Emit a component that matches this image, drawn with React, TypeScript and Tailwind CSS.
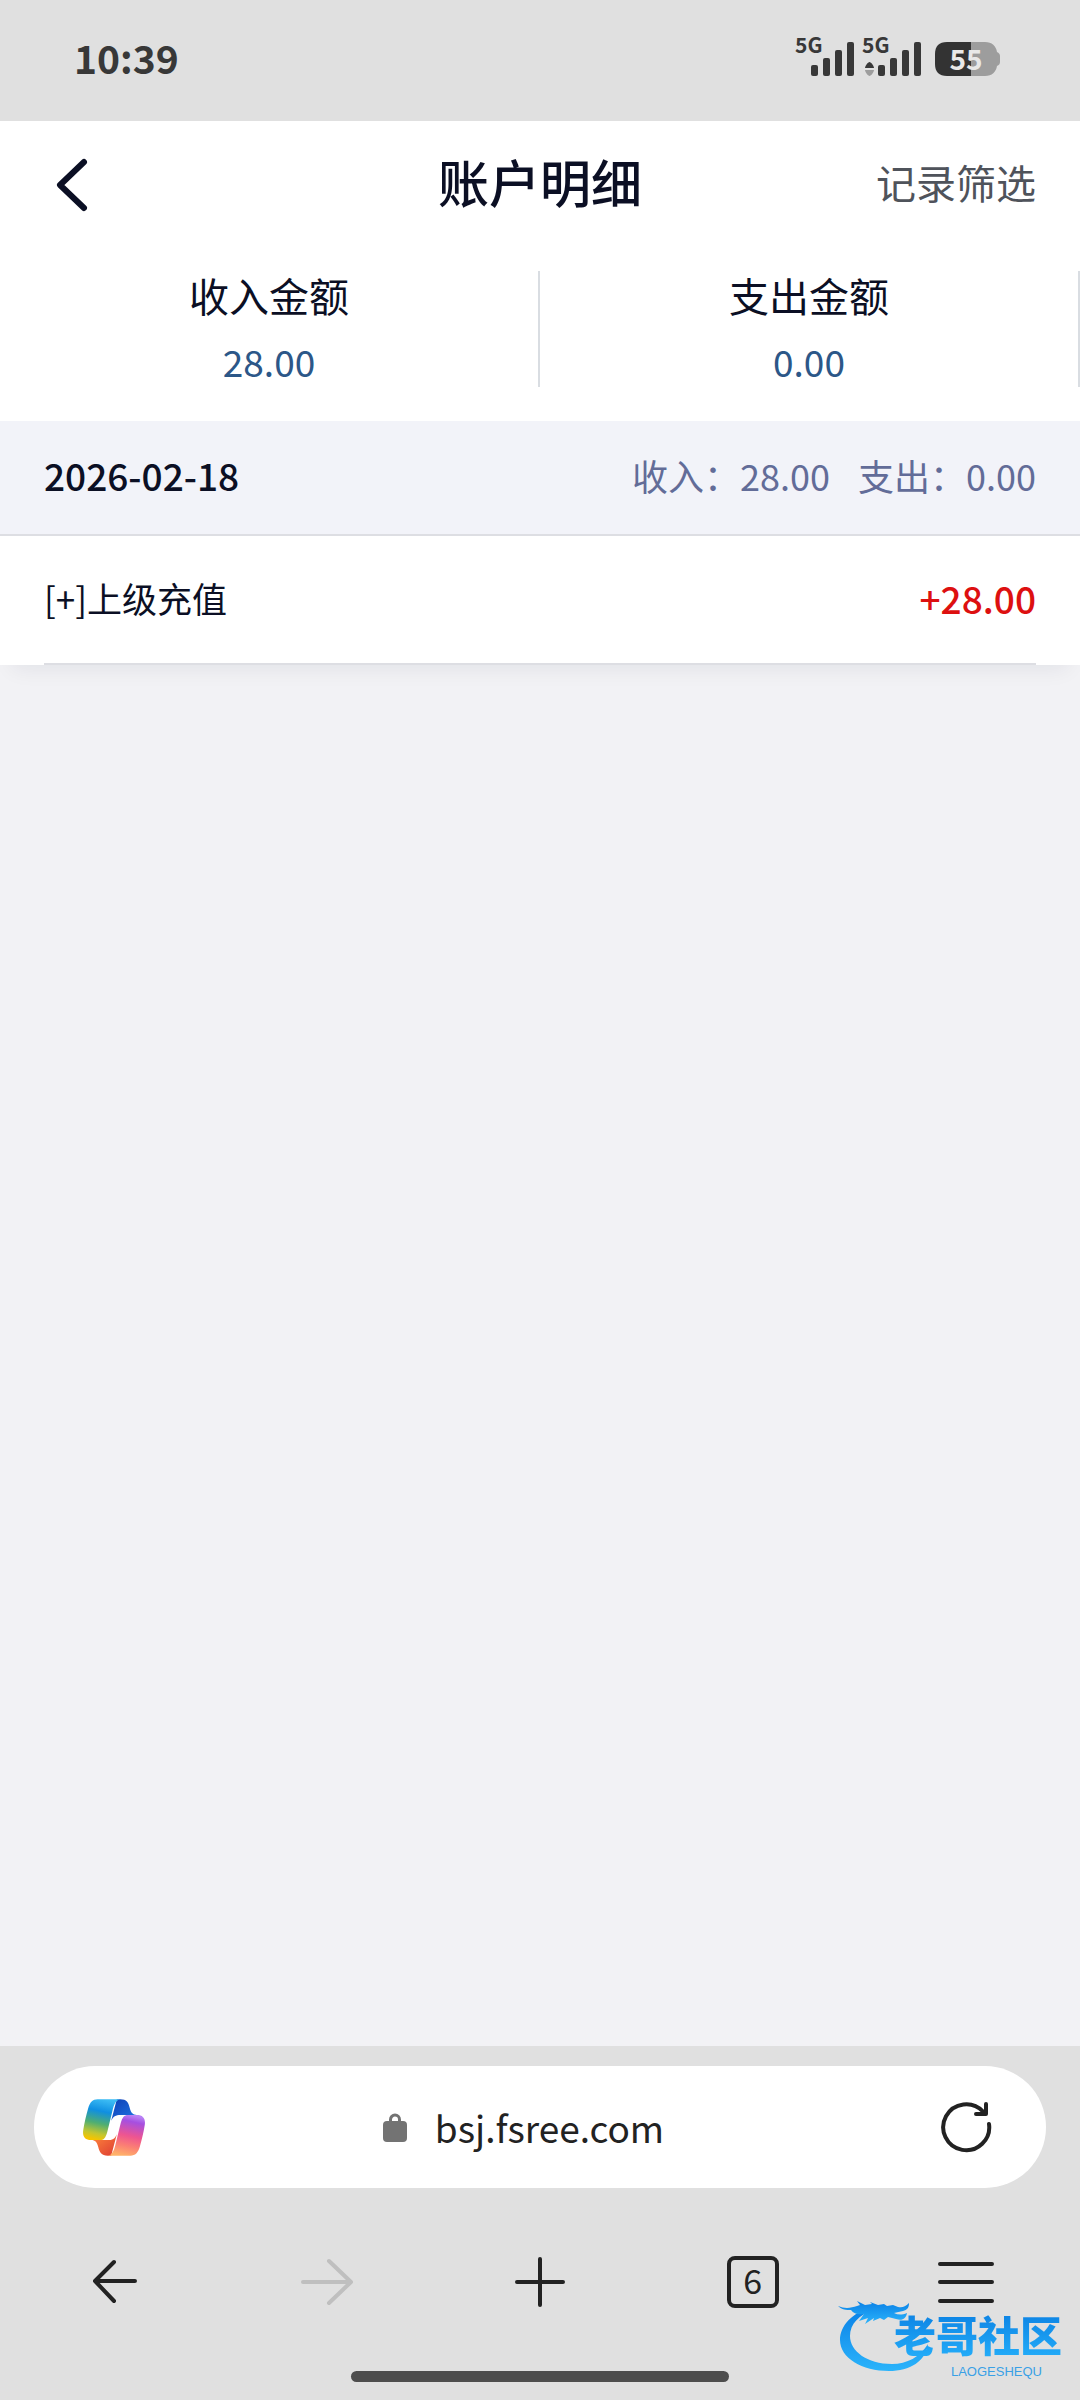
import type { ReactNode } from 'react';

interface LedgerEntry {
  title: string;
  amount: string;
}

interface LedgerDay {
  date: string;
  income: string;
  expense: string;
  entries: LedgerEntry[];
}

const totals = [
  { label: '收入金额', value: '28.00' },
  { label: '支出金额', value: '0.00' },
];

const days: LedgerDay[] = [
  {
    date: '2026-02-18',
    income: '28.00',
    expense: '0.00',
    entries: [{ title: '[+]上级充值', amount: '+28.00' }],
  },
];

const StatusIcons = () => (
  <svg width="212" height="62" viewBox="790 26 212 62" fill="#383838" role="img" aria-label="5G, 电量 55%">
    <g fontFamily="'Noto Sans CJK SC', sans-serif" fontWeight="700" fontSize="21">
      <text x="795" y="53">5G</text>
      <text x="862" y="53">5G</text>
    </g>
    <rect x="811" y="65" width="7" height="11" rx="2" />
    <rect x="823" y="58" width="7" height="18" rx="2" />
    <rect x="835" y="50" width="7" height="26" rx="2" />
    <rect x="847" y="42" width="7" height="34" rx="2" />
    <path d="M865 68c0-2 3-6 4.500-6s4.500 4 4.500 6z" />
    <path d="M865 70c0 2 3 6 4.500 6s4.500-4 4.500-6z" fill="#9d9d9d" />
    <rect x="878" y="65" width="7" height="11" rx="2" />
    <rect x="890" y="58" width="7" height="18" rx="2" />
    <rect x="902" y="50" width="7" height="26" rx="2" />
    <rect x="914" y="42" width="7" height="34" rx="2" />
    <path d="M971 42h14c7 0 11 4 12 10 2 1 3 2 3 4v6c0 2-1 3-3 4-1 6-5 10-12 10h-14z" fill="#9d9d9d" />
    <path d="M971 42h-24c-8 0-12 4-12 12v10c0 8 4 12 12 12h24z" fill="#333" />
    <text
      x="966"
      y="70"
      textAnchor="middle"
      fontFamily="'Noto Sans CJK SC', sans-serif"
      fontWeight="700"
      fontSize="28"
      fill="#e8e8e8"
    >
      55
    </text>
  </svg>
);

const CopilotIcon = () => (
  <svg width="62" height="57" viewBox="38 54 187 172" aria-hidden="true">
    <defs>
      <linearGradient id="ribbonCool" x1="0.600" y1="0" x2="0.400" y2="1">
        <stop offset="0" stopColor="#3cbcf4" />
        <stop offset="0.300" stopColor="#0f8fe2" />
        <stop offset="0.600" stopColor="#4fae72" />
        <stop offset="0.850" stopColor="#c3c62f" />
        <stop offset="1" stopColor="#f5c400" />
      </linearGradient>
      <linearGradient id="ribbonWarm" x1="0.600" y1="0" x2="0.400" y2="1">
        <stop offset="0" stopColor="#b982f5" />
        <stop offset="0.150" stopColor="#a64fe0" />
        <stop offset="0.500" stopColor="#ee5590" />
        <stop offset="0.750" stopColor="#fb7f74" />
        <stop offset="1" stopColor="#ffb269" />
      </linearGradient>
      <linearGradient id="foldBlue" x1="0" y1="0" x2="1" y2="1">
        <stop offset="0" stopColor="#0f3fb5" />
        <stop offset="1" stopColor="#2077e6" />
      </linearGradient>
      <linearGradient id="foldOrange" x1="0" y1="0" x2="1" y2="1">
        <stop offset="0" stopColor="#ff8a3c" />
        <stop offset="1" stopColor="#dd3b33" />
      </linearGradient>
    </defs>
    <path d="M140 55h10c20 0 25 10 29 26 4 15 10 21 21 21h-48c-16 0-23 4-29 18z" fill="url(#foldBlue)" />
    <path d="M123 225h-10c-20 0-25-10-29-26-4-15-10-21-21-21h48c16 0 23-4 29-18z" fill="url(#foldOrange)" />
    <path
      d="M82 55h68c-14 3-19 17-23 34l-16 65c-5 17-10 24-22 24H62c-18 0-27-11-23-32 3-20 9-44 14-62 6-21 14-29 29-29z"
      fill="url(#ribbonCool)"
    />
    <path
      d="M181 225h-68c14-3 19-17 23-34l16-65c5-17 10-24 22-24h27c18 0 27 11 23 32-3 20-9 44-14 62-6 21-14 29-29 29z"
      fill="url(#ribbonWarm)"
    />
  </svg>
);

const LockIcon = () => (
  <svg width="24" height="29" viewBox="0 0 24 29" fill="none" aria-hidden="true">
    <rect y="8" width="24" height="21" rx="4" fill="#737373" />
    <path d="M7.500 10V6.500a4.500 4.500 0 0 1 9 0V10" stroke="#737373" strokeWidth="3" />
  </svg>
);

const ReloadIcon = () => (
  <svg width="52" height="54" viewBox="0 0 52 54" fill="none" stroke="#222" strokeWidth="4" strokeLinecap="round" aria-hidden="true">
    <path d="M49 24A23 23 0 1 1 43 11.500" />
    <path d="M46 4v10H36" strokeLinejoin="round" />
  </svg>
);

const NavIcon = ({ children }: { children: ReactNode }) => (
  <svg
    width="60"
    height="60"
    viewBox="0 0 60 60"
    fill="none"
    stroke="currentColor"
    strokeWidth="4"
    strokeLinecap="round"
    strokeLinejoin="round"
    aria-hidden="true"
  >
    {children}
  </svg>
);

const Watermark = () => (
  <div className="pointer-events-none absolute right-[18px] bottom-7 h-[72px] w-[224px]">
    <svg className="absolute inset-0" width="224" height="72" viewBox="0 0 224 72" aria-hidden="true">
      <defs>
        <linearGradient id="dragon" x1="0" y1="0" x2="0" y2="1">
          <stop offset="0" stopColor="#0a80e6" />
          <stop offset="1" stopColor="#2bb4fb" />
        </linearGradient>
      </defs>
      <g fill="url(#dragon)">
        <path d="M34 8C14 12 2 26 2 40c0 18 22 31 49 31 21 0 37-10 39-27-8 13-21 20-36 20-25 0-42-13-42-28 0-12 9-21 23-26z" />
        <path d="M0 6c7 3 13 2 19 0l3-1-3-4 8 4 7-1-2-2 8 3 6-1 3 2 6-1 5 2c4 1 7 0 11-4 0 5-2 7-6 8l-9 2c4 2 8 2 13 0-1 6-5 8-11 6l-8-2-4 3-4-2-7 3 1-3-9 6 3-6-9 3 5-7c-6 1-10 0-13-4C8 10 4 10 0 6z" />
      </g>
    </svg>
    <div className="absolute top-1 right-0 flex flex-col items-end">
      <span className="bg-linear-to-b from-[#0a7be0] to-[#27b2fb] bg-clip-text text-[42px] leading-[60px] font-black text-transparent">
        老哥社区
      </span>
      <span className="pr-5 font-['Liberation_Sans',sans-serif] text-[13px] leading-[15px] text-[#3aa0e6]">LAOGESHEQU</span>
    </div>
  </div>
);

export default function App() {
  return (
    <div className="relative flex min-h-screen flex-col bg-[#f2f2f5] font-['Noto_Sans_CJK_SC','Liberation_Sans',sans-serif] text-[#0b0f24]">
      <div className="flex h-[121px] items-center justify-between bg-[#e0e0e0] pr-[78px] pb-2 pl-[74px]">
        <time className="text-[39px] leading-[60px] font-bold text-[#383838]">10:39</time>
        <StatusIcons />
      </div>

      <header className="grid h-[124px] grid-cols-[1fr_auto_1fr] items-center bg-white px-11">
        <button type="button" aria-label="返回" className="justify-self-start pt-1 pl-[10px]">
          <svg width="36" height="56" viewBox="0 0 36 56" fill="none" stroke="#0b0f24" strokeWidth="6" strokeLinecap="round" strokeLinejoin="round">
            <path d="M30 5L6 28l24 23" />
          </svg>
        </button>
        <h1 className="pb-1 text-[51px] leading-[64px] font-medium">账户明细</h1>
        <button type="button" className="justify-self-end pb-0.5 text-[40px] leading-[64px] text-[#4f535b]">
          记录筛选
        </button>
      </header>

      <dl className="grid grid-cols-2 bg-white pt-[26px] pb-[34px]">
        {totals.map((total) => (
          <div key={total.label} className="border-r-2 border-[#d9dde2] text-center">
            <dt className="text-[40px] leading-[48px]">{total.label}</dt>
            <dd className="mt-4 text-[37px] leading-[52px] text-[#2c5788]">{total.value}</dd>
          </div>
        ))}
      </dl>

      <main className="flex-1">
        {days.map((day) => (
          <section key={day.date} className="bg-white shadow-[0_16px_20px_-12px_rgba(20,24,60,0.07)]">
            <div className="flex h-[115px] items-center justify-between border-b-2 border-[#dddee3] bg-[#f2f3f9] px-11 pb-1.5">
              <h2 className="text-[37px] leading-[50px] font-medium">{day.date}</h2>
              <p className="flex gap-7 text-[36px] leading-[50px] text-[#626c98]">
                <span>收入：{day.income}</span>
                <span>支出：{day.expense}</span>
              </p>
            </div>
            <ul className="px-11">
              {day.entries.map((entry) => (
                <li key={entry.title} className="flex h-[129px] items-center justify-between border-b-2 border-[#dddee3] pb-1">
                  <span className="text-[35px] leading-[50px]">{entry.title}</span>
                  <span className="text-[37px] leading-[50px] font-medium text-[#dd1010]">{entry.amount}</span>
                </li>
              ))}
            </ul>
          </section>
        ))}
      </main>

      <footer className="bg-[#e0e0e0] pt-5 pb-[18px] text-[#222]">
        <div className="mx-[34px] grid h-[122px] grid-cols-[1fr_auto_1fr] items-center rounded-full bg-white pr-[54px] pl-[49px]">
          <button type="button" aria-label="Copilot" className="justify-self-start">
            <CopilotIcon />
          </button>
          <button type="button" className="flex items-center gap-7 pr-7">
            <LockIcon />
            <span className="text-[37px] leading-[56px]">bsj.fsree.com</span>
          </button>
          <button type="button" aria-label="刷新" className="justify-self-end">
            <ReloadIcon />
          </button>
        </div>

        <nav className="mt-8 grid h-[124px] grid-cols-5 items-center justify-items-center px-2">
          <button type="button" aria-label="后退">
            <NavIcon>
              <path d="M51 29H11M30 10L11 29l19 20" />
            </NavIcon>
          </button>
          <button type="button" aria-label="前进" disabled className="text-[#bfbfbf]">
            <NavIcon>
              <path d="M6 30h48M32 9l22 21-22 21" />
            </NavIcon>
          </button>
          <button type="button" aria-label="新建标签页">
            <NavIcon>
              <path d="M7 30h46M30 7v46" />
            </NavIcon>
          </button>
          <button
            type="button"
            aria-label="标签页 6"
            className="flex size-[52px] items-center justify-center rounded-lg border-4 border-[#222] pb-1 text-[34px] leading-[40px]"
          >
            6
          </button>
          <button type="button" aria-label="菜单">
            <NavIcon>
              <path d="M4 12h52M4 30h52M4 49h52" />
            </NavIcon>
          </button>
        </nav>

        <div className="mx-auto mt-[27px] h-[11px] w-[35%] rounded-full bg-[#4d4d4d]" />
      </footer>

      <Watermark />
    </div>
  );
}
